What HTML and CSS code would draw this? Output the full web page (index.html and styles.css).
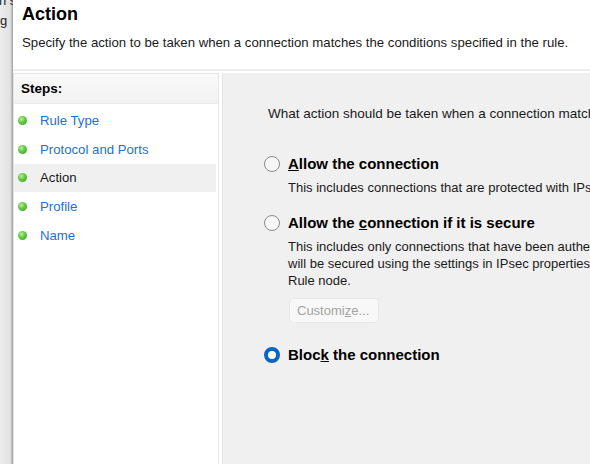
FILE: index.html
```html
<!DOCTYPE html>
<html>
<head>
<meta charset="utf-8">
<link rel="stylesheet" href="styles.css">
</head>
<body>
<div class="screen">
  <div class="behind">
    <div class="frag f1">n s</div>
    <div class="frag f2">g</div>
  </div>
  <div class="window">
    <div class="head">
      <div class="title">Action</div>
      <div class="subtitle">Specify the action to be taken when a connection matches the conditions specified in the rule.</div>
    </div>
    <div class="sep"></div>
    <div class="body">
      <div class="steps">
        <div class="steps-head">Steps:</div>
        <div class="step"><span class="dot"></span><span class="link">Rule Type</span></div>
        <div class="step"><span class="dot"></span><span class="link">Protocol and Ports</span></div>
        <div class="step current"><span class="dot"></span><span class="cur">Action</span></div>
        <div class="step"><span class="dot"></span><span class="link">Profile</span></div>
        <div class="step"><span class="dot"></span><span class="link">Name</span></div>
      </div>
      <div class="content">
        <div class="question">What action should be taken when a connection matches the specified conditions?</div>
        <div class="option opt1">
          <span class="radio"></span>
          <div class="opt-text">
            <div class="label"><u>A</u>llow the connection</div>
            <div class="desc">This includes connections that are protected with IPsec as well as those are not.</div>
          </div>
        </div>
        <div class="option opt2">
          <span class="radio"></span>
          <div class="opt-text">
            <div class="label">Allow the <u>c</u>onnection if it is secure</div>
            <div class="desc">This includes only connections that have been authenticated by using IPsec. Connections<br>will be secured using the settings in IPsec properties and rules in the Connection Security<br>Rule node.</div>
            <div class="btn">Customi<u>z</u>e...</div>
          </div>
        </div>
        <div class="option opt3">
          <span class="radio on"></span>
          <div class="opt-text">
            <div class="label">Bloc<u>k</u> the connection</div>
          </div>
        </div>
      </div>
    </div>
  </div>
</div>
</body>
</html>
```
FILE: styles.css
```css
html, body {
  margin: 0;
  padding: 0;
  width: 590px;
  height: 464px;
  overflow: hidden;
  background: #ffffff;
  font-family: "Liberation Sans", Arial, sans-serif;
  color: #1a1a1a;
}
.screen {
  display: flex;
  width: 590px;
  height: 464px;
}
.behind {
  width: 13px;
  flex: none;
  overflow: hidden;
  background: linear-gradient(to right, #ececec 0, #e2e2e2 10px, #bdbdbd 12px, #8f8f8f 13px);
  white-space: nowrap;
  font-size: 13px;
  color: #222;
}
.frag { line-height: 16px; }
.f1 { margin-left: -1px; margin-top: -7px; }
.f2 { margin-left: 0; margin-top: 4px; }
.window {
  flex: 1;
  display: flex;
  flex-direction: column;
  background: #ffffff;
  min-width: 0;
  white-space: nowrap;
  overflow: hidden;
}
.head {
  padding: 4px 0 0 9px;
  height: 65px;
  box-sizing: border-box;
}
.title {
  font-size: 18px;
  font-weight: bold;
  line-height: 21px;
  color: #000;
}
.subtitle {
  margin-top: 9px;
  font-size: 13.2px;
  line-height: 17px;
  color: #1a1a1a;
}
.sep {
  height: 2px;
  margin-top: 4px;
  background: #ececec;
}
.body {
  flex: 1;
  display: flex;
  padding-top: 2px;
}
.steps {
  width: 206px;
  flex: none;
  border: 1px solid #e6e6e6;
  border-bottom: none;
  background: #fff;
  box-sizing: border-box;
}
.steps-head {
  height: 29px;
  padding-left: 7px;
  font-size: 13.5px;
  font-weight: bold;
  line-height: 29px;
  color: #000;
  background: linear-gradient(#fafafa, #f2f2f2);
  border-bottom: 1px solid #ececec;
  margin-bottom: 2px;
}
.step {
  height: 28.8px;
  display: flex;
  align-items: center;
  margin-right: 2px;
  font-size: 13.2px;
}
.step.current { background: #f0f0f0; }
.dot {
  width: 9px;
  height: 9px;
  border-radius: 50%;
  margin-left: 4px;
  margin-right: 13px;
  background: radial-gradient(circle at 38% 35%, #b9f09a 0, #5fc63e 45%, #33a11d 100%);
}
.link { color: #1f6fd6; }
.cur { color: #1a1a1a; }
.content {
  flex: 1;
  margin-left: 3px;
  background: #f0f0f0;
  border-left: 1px solid #e4e4e4;
  padding-left: 41px;
  min-width: 0;
  overflow: hidden;
  font-size: 13px;
}
.question {
  margin-top: 32px;
  line-height: 17px;
  margin-left: 4px;
  font-size: 13.5px;
}
.option {
  display: flex;
  align-items: flex-start;
}
.opt1 { margin-top: 34px; }
.opt2 { margin-top: 19px; }
.opt3 { margin-top: 24px; }
.radio {
  width: 16px;
  height: 16px;
  box-sizing: border-box;
  border-radius: 50%;
  border: 1px solid #8a8a8a;
  background: #f7f7f7;
  flex: none;
  margin-right: 8px;
  margin-top: 0;
}
.radio.on {
  border: 4.5px solid #0a64c2;
  background: #ffffff;
}
.label {
  font-size: 15px;
  font-weight: bold;
  line-height: 16px;
  color: #000;
}
.desc {
  margin-top: 7px;
  line-height: 17px;
  color: #1a1a1a;
}
.btn {
  margin-top: 9px;
  margin-left: 1px;
  width: 90px;
  height: 25px;
  box-sizing: border-box;
  border: 1px solid #e6e6e6;
  border-radius: 4px;
  background: #f8f8f8;
  color: #a3a3a3;
  line-height: 23px;
  padding-left: 7px;
  font-size: 13px;
}
```
